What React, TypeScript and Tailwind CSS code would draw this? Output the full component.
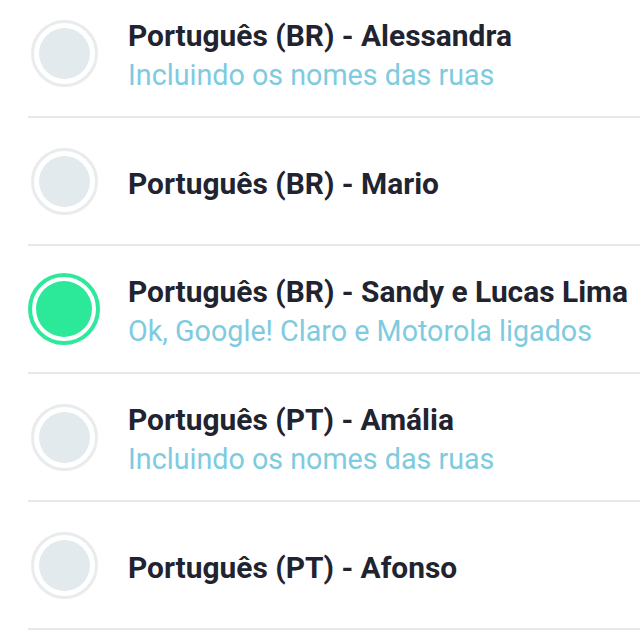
const voices = [
  { name: "Português (BR) - Alessandra", note: "Incluindo os nomes das ruas" },
  { name: "Português (BR) - Mario" },
  { name: "Português (BR) - Sandy e Lucas Lima", note: "Ok, Google! Claro e Motorola ligados", selected: true },
  { name: "Português (PT) - Amália", note: "Incluindo os nomes das ruas" },
  { name: "Português (PT) - Afonso" },
];

const Radio = ({ selected }: { selected?: boolean }) =>
  selected ? (
    <div className="w-[72px] h-[72px] rounded-full border-4 border-[#2ee89b] p-[4px] shrink-0">
      <div className="w-full h-full rounded-full bg-[#2ce99a]" />
    </div>
  ) : (
    <div className="w-[67px] h-[67px] rounded-full border-[3px] border-[#e9ecec] p-[5px] shrink-0">
      <div className="w-full h-full rounded-full bg-[#e3eaed]" />
    </div>
  );

export default function App() {
  return (
    <div className="w-[640px] h-[640px] overflow-hidden bg-white" style={{ fontFamily: "Roboto, sans-serif" }}>
      <ul className="-mt-[10px] ml-[28px]">
        {voices.map((v) => (
          <li key={v.name} className="h-[128px] flex items-center border-b-2 border-[#e6e7e7]">
            <div className="w-[72px] flex items-center justify-center mr-[28px]">
              <Radio selected={v.selected} />
            </div>
            <div className="flex flex-col pt-[5px]">
              <span className="text-[29.9px] leading-[39px] font-bold text-[#1f2430] whitespace-nowrap">{v.name}</span>
              {v.note && (
                <span className="text-[28.7px] leading-[40px] text-[#7ecbdf] whitespace-nowrap">{v.note}</span>
              )}
            </div>
          </li>
        ))}
      </ul>
    </div>
  );
}
